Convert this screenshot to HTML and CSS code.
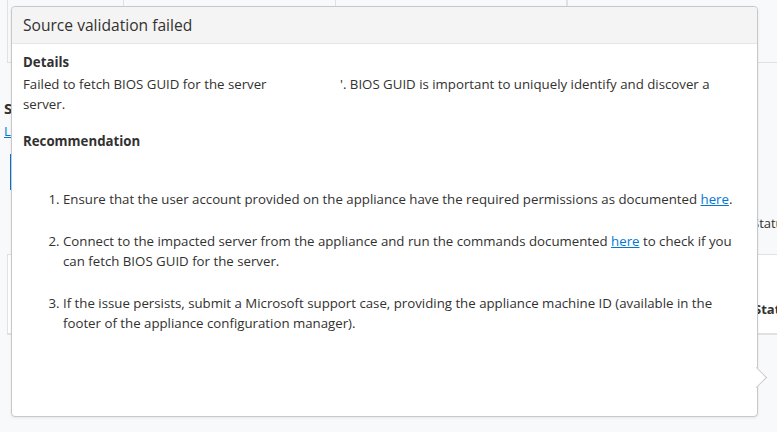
FILE: index.html
```html
<!DOCTYPE html>
<html lang="en">
<head>
    <meta charset="UTF-8">
    <meta name="viewport" content="width=device-width, initial-scale=1.0">
    <title>Source validation failed</title>
    <link rel="stylesheet" href="styles.css">
</head>
<body>

    <div class="page">
        <div class="top-row">
            <div class="cell cell-a"></div>
            <div class="cell cell-b"></div>
            <div class="cell cell-c"></div>
            <div class="cell cell-d"></div>
        </div>

        <div class="section">
            <h2 class="section-title">Server</h2>
            <a class="section-link" href="#">Learn more</a>
            <div class="accent-bar"></div>
        </div>

        <div class="status-label">Status</div>

        <div class="grid-card">
            <div class="grid-head">Status</div>
        </div>
    </div>

    <div class="callout">
        <div class="callout-header">Source validation failed</div>
        <div class="callout-body">
            <h3>Details</h3>
            <p>Failed to fetch BIOS GUID for the server<span class="masked">&nbsp;</span>'. BIOS GUID is important to uniquely identify and discover a server.</p>

            <h3 class="rec-title">Recommendation</h3>
            <ol class="steps">
                <li>Ensure that the user account provided on the appliance have the required permissions as documented <a href="#">here</a>.</li>
                <li>Connect to the impacted server from the appliance and run the commands documented <a href="#">here</a> to check if you can fetch BIOS GUID for the server.</li>
                <li>If the issue persists, submit a Microsoft support case, providing the appliance machine ID (available in the footer of the appliance configuration manager).</li>
            </ol>
        </div>
        <div class="beak"></div>
    </div>

</body>
</html>
```

FILE: styles.css
```css
body {
    margin: 0;
    padding: 0;
    background-color: #f8f9fa;
    font-family: "Open Sans", "Noto Sans", Arial, sans-serif;
    color: #323130;
    overflow: hidden;
}

.page {
    width: 777px;
    height: 432px;
}

/* background page, mostly hidden by the callout */
.top-row {
    display: flex;
    height: 62px;
    border-bottom: 1px solid #e1e1e1;
    margin-left: 7px;
    border-left: 1px solid #e1e1e1;
}

.cell {
    border-right: 1px solid #e1e1e1;
}

.cell-a { width: 115px; }
.cell-b { width: 211px; }
.cell-c { width: 230px; }

.section {
    padding: 35px 0 0 4px;
}

.section-title {
    margin: 0;
    font-size: 15px;
    font-weight: 700;
    line-height: 20px;
}

.section-link {
    display: block;
    margin-top: 4px;
    font-size: 13px;
    color: #0078d4;
    line-height: 18px;
}

.accent-bar {
    width: 2px;
    height: 36px;
    margin: 14px 0 0 6px;
    background-color: #0078d4;
}

.status-label {
    margin: 24px 0 0 752px;
    font-size: 13px;
    line-height: 18px;
}

.grid-card {
    margin: 22px 0 0 7px;
    height: 78px;
    border-top: 1px solid #e1e1e1;
    border-left: 1px solid #e1e1e1;
    border-bottom: 2px solid #e1e1e1;
    background-color: #fff;
}

.grid-head {
    padding: 45px 0 0 746px;
    font-size: 13px;
    font-weight: 700;
}

/* callout dialog */
.callout {
    position: absolute;
    left: 11px;
    top: 6px;
    width: 745px;
    height: 409px;
    background-color: #fff;
    border: 1px solid #c8c8c8;
    border-radius: 4px;
    box-shadow: 0 1px 3px rgba(0, 0, 0, 0.08);
}

.callout-header {
    height: 36px;
    line-height: 36px;
    padding-left: 11px;
    background-color: #f4f4f4;
    border-bottom: 1px solid #e6e6e6;
    border-radius: 4px 4px 0 0;
    font-size: 15.6px;
}

.callout-body {
    padding: 8px 22px 0 11px;
    font-size: 13.25px;
    line-height: 20px;
}

.callout-body h3 {
    margin: 0;
    font-size: 13.25px;
    font-weight: 700;
    line-height: 20px;
}

.callout-body p {
    margin: 2px 0 0 0;
}

.masked {
    padding-right: 70px;
}

.rec-title {
    padding-top: 17px;
}

.steps {
    margin: 38px 0 0 0;
    padding-left: 40px;
}

.steps li {
    margin-bottom: 22px;
}

.steps a {
    color: #0078d4;
}

.beak {
    position: absolute;
    right: -7px;
    top: 363px;
    width: 14px;
    height: 14px;
    background-color: #fff;
    border-top: 1px solid #c8c8c8;
    border-right: 1px solid #c8c8c8;
    transform: rotate(45deg);
}
```
